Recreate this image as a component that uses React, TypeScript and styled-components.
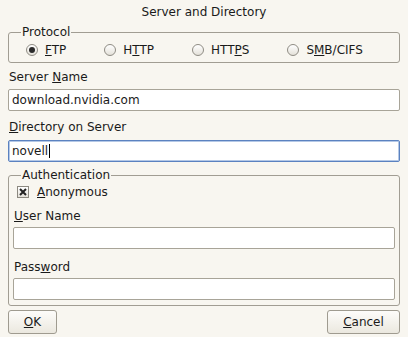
import React from 'react';
import styled, { createGlobalStyle } from 'styled-components';

const Global = createGlobalStyle`
  html, body {
    margin: 0;
    background: #f8f6f0;
  }
  body {
    font-family: "DejaVu Sans", "Liberation Sans", sans-serif;
    font-size: 12px;
    color: #1a1a1a;
  }
`;

const Dialog = styled.div`
  width: 392px;
  padding: 0 8px;
  display: flex;
  flex-direction: column;
`;

const Title = styled.div`
  height: 25px;
  line-height: 25px;
  text-align: center;
`;

const Group = styled.fieldset<{ $top?: number; $bottom: number }>`
  margin: ${(p) => p.$top || 0}px 0 0 0;
  padding: 0 4px ${(p) => p.$bottom}px 4px;
  border: 1px solid #a19d93;
  border-radius: 3px;
  min-inline-size: 0;
`;

const Legend = styled.legend`
  margin-left: 8px;
  padding: 0 1px;
  line-height: 14px;
  height: 14px;
`;

const RadioRow = styled.div`
  height: 22px;
  display: flex;
  align-items: center;
  gap: 38px;
  padding-left: 13px;
`;

const Choice = styled.label`
  display: flex;
  align-items: center;
  gap: 7px;
`;

const Radio = styled.span<{ $on?: boolean }>`
  width: 12px;
  height: 12px;
  box-sizing: border-box;
  border-radius: 50%;
  border: 1px solid #8f8c84;
  background: linear-gradient(#ffffff, #e4e1d9);
  display: flex;
  align-items: center;
  justify-content: center;
  &::after {
    content: '';
    display: ${(p) => (p.$on ? 'block' : 'none')};
    width: 6px;
    height: 6px;
    border-radius: 50%;
    background: #2a2a2a;
  }
`;

const Label = styled.div<{ $top: number; $indent?: number }>`
  margin-top: ${(p) => p.$top}px;
  padding-left: ${(p) => p.$indent || 1}px;
  line-height: 14px;
  height: 14px;
`;

const Entry = styled.div<{ $top: number; $focus?: boolean }>`
  margin-top: ${(p) => p.$top}px;
  height: 22px;
  box-sizing: border-box;
  background: #fff;
  border: 1px solid ${(p) => (p.$focus ? '#5b82c0' : '#a8a498')};
  box-shadow: ${(p) => (p.$focus ? 'inset 0 0 0 1px #b4c8e6' : 'none')};
  border-radius: 2px;
  padding-left: 3px;
  display: flex;
  align-items: center;
`;

const Caret = styled.span`
  display: inline-block;
  width: 1px;
  height: 14px;
  background: #000;
  margin-left: 1px;
`;

const CheckRow = styled.div`
  height: 20px;
  display: flex;
  align-items: center;
  gap: 8px;
  padding-left: 4px;
`;

const Box = styled.span`
  width: 12px;
  height: 12px;
  box-sizing: border-box;
  border: 1px solid #8c8980;
  background: linear-gradient(#ffffff, #e4e1d9);
  display: flex;
  align-items: center;
  justify-content: center;
`;

const Buttons = styled.div`
  margin-top: 4px;
  display: flex;
  justify-content: space-between;
`;

const Button = styled.button<{ $w: number }>`
  width: ${(p) => p.$w}px;
  height: 24px;
  font: inherit;
  color: inherit;
  border: 1px solid #9f9b90;
  border-radius: 3px;
  background: linear-gradient(#fdfcfa, #ebe8df);
  padding: 0;
`;

const protocols = [
  { pre: '', key: 'F', post: 'TP', on: true },
  { pre: 'H', key: 'T', post: 'TP' },
  { pre: 'HTT', key: 'P', post: 'S' },
  { pre: 'S', key: 'M', post: 'B/CIFS' },
];

const App = () => (
  <Dialog>
    <Global />
    <Title>Server and Directory</Title>
    <Group $bottom={1}>
      <Legend>Protocol</Legend>
      <RadioRow>
        {protocols.map((p) => (
          <Choice key={p.pre + p.key + p.post}>
            <Radio $on={p.on} />
            <span>
              {p.pre}
              <u>{p.key}</u>
              {p.post}
            </span>
          </Choice>
        ))}
      </RadioRow>
    </Group>
    <Label $top={7}>
      Server <u>N</u>ame
    </Label>
    <Entry $top={5}>download.nvidia.com</Entry>
    <Label $top={9}>
      <u>D</u>irectory on Server
    </Label>
    <Entry $top={6} $focus>
      novell
      <Caret />
    </Entry>
    <Group $top={6} $bottom={5}>
      <Legend>Authentication</Legend>
      <CheckRow>
        <Box>
          <svg width="8" height="8" viewBox="0 0 8 8">
            <path d="M1 1L7 7M7 1L1 7" stroke="#222" strokeWidth="2" />
          </svg>
        </Box>
        <span>
          <u>A</u>nonymous
        </span>
      </CheckRow>
      <Label $top={7}>
        <u>U</u>ser Name
      </Label>
      <Entry $top={4} />
      <Label $top={11}>
        Pass<u>w</u>ord
      </Label>
      <Entry $top={4} />
    </Group>
    <Buttons>
      <Button $w={49}>
        <u>O</u>K
      </Button>
      <Button $w={73}>
        <u>C</u>ancel
      </Button>
    </Buttons>
  </Dialog>
);

export default App;
